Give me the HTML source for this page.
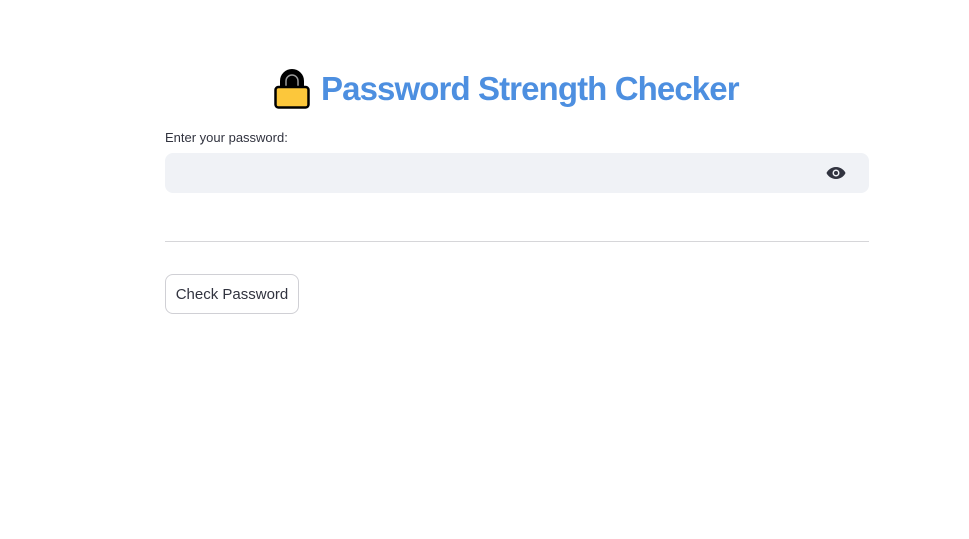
<!DOCTYPE html>
<html><head><style>
body{margin:0;width:969px;height:539px;background:#fff;font-family:"Liberation Sans",sans-serif;position:relative;overflow:hidden}
.t{position:absolute;left:321px;top:70px;font-size:33px;font-weight:bold;color:#4d8fe0;letter-spacing:-0.9px;white-space:nowrap}
.lbl{position:absolute;left:165px;top:130px;font-size:13px;color:#31333f}
.in{position:absolute;left:165px;top:153px;width:704px;height:40px;background:#f0f2f6;border-radius:8px}
.hr{position:absolute;left:165px;top:241px;width:704px;height:1px;background:#d6d6d9}
.btn{position:absolute;left:165px;top:274px;width:132px;height:38px;border:1px solid #d0d0d5;border-radius:8px;font-size:15px;color:#31333f;text-align:center;line-height:40px}
</style></head><body>
<svg style="position:absolute;left:274px;top:67px" width="36" height="42" viewBox="0 0 36 42">
<path d="M7 21V14a11 11 0 0 1 22 0v7" fill="#000" stroke="#000" stroke-width="2"/>
<path d="M12 21V14a6 6 0 0 1 12 0v7z" fill="#000" stroke="#999" stroke-width="1.5"/>
<rect x="1.5" y="20" width="33" height="20.5" rx="3" fill="#fcc73b" stroke="#000" stroke-width="2.5"/>
</svg>
<div class="t">Password Strength Checker</div>
<div class="lbl">Enter your password:</div>
<div class="in"></div>
<svg style="position:absolute;left:826px;top:166px" width="20" height="14" viewBox="0 0 20 14"><path d="M10 1C5 1 1.5 4.5 0.5 7 1.5 9.5 5 13 10 13s8.5-3.5 9.5-6C18.5 4.5 15 1 10 1z" fill="#31333f"/><circle cx="10" cy="7" r="3.5" fill="#f0f2f6"/><circle cx="10" cy="7" r="2" fill="#31333f"/></svg>
<div class="hr"></div>
<div class="btn">Check Password</div>
</body></html>
